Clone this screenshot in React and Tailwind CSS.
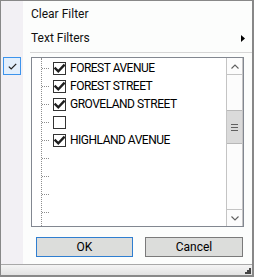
import React from "react";

const items = [
  { label: "FOREST AVENUE", checked: true },
  { label: "FOREST STREET", checked: true },
  { label: "GROVELAND STREET", checked: true },
  { label: "", checked: false },
  { label: "HIGHLAND AVENUE", checked: true },
];

function Check() {
  return (
    <svg width="11" height="11" viewBox="0 0 11 11">
      <path d="M1.5 5.5 L4.3 8.3 L9.8 2.5" fill="none" stroke="#1e1e1e" strokeWidth="2.4" strokeLinecap="square" />
    </svg>
  );
}

function Row({ label, checked, empty }) {
  return (
    <div className="h-[18px] flex items-center">
      <div className="w-[7px] h-0 border-t border-dotted border-[#8e8e8e]" />
      {!empty && (
        <>
          <div className="ml-[4px] w-[13px] h-[13px] border border-[#333333] bg-white flex items-center justify-center">
            {checked && <Check />}
          </div>
          <span className="ml-[4px] tracking-[-0.5px] text-black whitespace-nowrap">{label}</span>
        </>
      )}
    </div>
  );
}

export default function App() {
  return (
    <div
      className="w-[254px] h-[277px] flex flex-col border-l border-t border-r-2 border-b-2 border-[#888888] text-[12px] leading-none text-[#111]"
      style={{ fontFamily: "Roboto, 'Liberation Sans', sans-serif" }}
    >
      <div className="flex flex-1 min-h-0">
        <div className="w-[22px] bg-[#f2f0f4] pl-[2px] pt-[56px]">
          <div className="w-[18px] h-[18px] border border-[#3d94ec] bg-[#e3effc] flex items-center justify-center">
            <svg width="9" height="7" viewBox="0 0 9 7">
              <path d="M0.8 3.6 L3.2 5.9 L8.2 0.9" fill="none" stroke="#222" strokeWidth="1.3" />
            </svg>
          </div>
        </div>
        <div className="flex-1 bg-[#fcfdfc] pt-[1px] flex flex-col">
          <div className="h-[24px] flex items-center pl-[8px]">Clear Filter</div>
          <div className="h-[24px] flex items-center pl-[8px] pr-[7px] justify-between">
            <span>Text Filters</span>
            <svg width="4" height="7" viewBox="0 0 4 7">
              <path d="M0 0 L4 3.5 L0 7 Z" fill="#000" />
            </svg>
          </div>
          <div className="mt-[2px] ml-[7px] h-px bg-[#d6d6d6]" />
          <div className="mt-[4px] ml-[8px] w-[213px] h-[170px] border border-[#828790] bg-white flex">
            <div className="flex-1 overflow-hidden">
              <div className="ml-[9px] h-full border-l border-dotted border-[#8e8e8e] pt-[1px]">
                {items.map((it, i) => (
                  <Row key={i} label={it.label} checked={it.checked} />
                ))}
                <Row empty />
                <Row empty />
                <Row empty />
                <Row empty />
              </div>
            </div>
            <div className="w-[17px] flex flex-col border-x border-[#c4c4c4] bg-[#fcfcfc]">
              <div className="h-[17px] border-b border-[#c4c4c4] flex items-center justify-center">
                <svg width="8" height="5" viewBox="0 0 8 5">
                  <path d="M0.5 4.5 L4 1 L7.5 4.5" fill="none" stroke="#606060" strokeWidth="1.1" />
                </svg>
              </div>
              <div className="h-[35px]" />
              <div className="h-[34px] bg-[#dadada] border-y border-[#b8b8b8] flex flex-col items-center justify-center gap-[2px]">
                <div className="w-[7px] h-px bg-[#606060]" />
                <div className="w-[7px] h-px bg-[#606060]" />
                <div className="w-[7px] h-px bg-[#606060]" />
              </div>
              <div className="flex-1" />
              <div className="h-[17px] border-t border-[#c4c4c4] flex items-center justify-center">
                <svg width="8" height="5" viewBox="0 0 8 5">
                  <path d="M0.5 0.5 L4 4 L7.5 0.5" fill="none" stroke="#606060" strokeWidth="1.1" />
                </svg>
              </div>
            </div>
          </div>
          <div className="mt-[10px] flex">
            <button className="ml-[13px] w-[97px] h-[20px] border border-[#2f7ed0] bg-[#dcdddb] flex items-center justify-center text-black">
              OK
            </button>
            <button className="ml-[12px] w-[98px] h-[20px] border border-[#7a7a7a] bg-[#dcdddb] flex items-center justify-center text-black">
              Cancel
            </button>
          </div>
        </div>
      </div>
      <div className="h-[11px] border-t border-[#a8a8a8] bg-gradient-to-b from-[#f4f4f4] to-[#e2e2e2] flex justify-end items-end pr-[1px] pb-[1px]">
        <svg width="7" height="7" viewBox="0 0 7 7">
          <rect x="5" y="1" width="2" height="2" fill="#444" />
          <rect x="3" y="3" width="2" height="2" fill="#444" />
          <rect x="5" y="3" width="2" height="2" fill="#444" />
          <rect x="1" y="5" width="2" height="2" fill="#444" />
          <rect x="3" y="5" width="2" height="2" fill="#444" />
          <rect x="5" y="5" width="2" height="2" fill="#444" />
        </svg>
      </div>
    </div>
  );
}
